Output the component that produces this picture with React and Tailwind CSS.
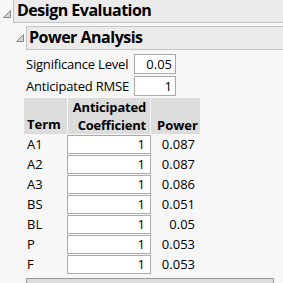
const rows = [
  ['A1', '1', '0.087'],
  ['A2', '1', '0.087'],
  ['A3', '1', '0.086'],
  ['BS', '1', '0.051'],
  ['BL', '1', '0.05'],
  ['P', '1', '0.053'],
  ['F', '1', '0.053'],
];

function Disclosure() {
  return (
    <svg width="8" height="8" viewBox="0 0 8 8" className="shrink-0">
      <polygon points="7.5,0.5 7.5,7.5 0.5,7.5" fill="#d4d4d4" stroke="#8a8a8a" strokeWidth="1" />
    </svg>
  );
}

export default function App() {
  return (
    <div className="w-[283px] h-[283px] overflow-hidden bg-[#f7f7f7] text-black font-['Open_Sans',sans-serif]">
      <div className="flex items-start">
        <div className="w-[13px] pl-[3px] pt-[10px]">
          <Disclosure />
        </div>
        <div className="flex-1 -mt-px h-[24px] bg-[#ebebeb] border-l border-b border-[#c4c4c4] pl-[3px] flex items-end pb-[1px]">
          <span className="text-[16px] font-bold leading-none tracking-[-0.5px] pb-[3px]">Design Evaluation</span>
        </div>
      </div>

      <div className="flex items-start mt-[3px]">
        <div className="w-[26px] pl-[16px] pt-[8px]">
          <Disclosure />
        </div>
        <div className="flex-1 h-[24px] bg-[#ebebeb] border-t border-l border-b border-[#c4c4c4] pl-[2px] flex items-end">
          <span className="text-[16px] font-bold leading-none tracking-[-0.5px] pb-[4px]">Power Analysis</span>
        </div>
      </div>

      <div className="pl-[26px] pt-[4px] text-[13px] leading-none">
        <div className="flex items-center h-[20px]">
          <span className="w-[108px] tracking-[-0.2px]">Significance Level</span>
          <div className="w-[42px] h-[20px] bg-white border border-[#a9a9a9] flex items-center justify-end pr-[3px]">0.05</div>
        </div>
        <div className="flex items-center h-[20px] mt-[2px]">
          <span className="w-[108px] tracking-[-0.2px]">Anticipated RMSE</span>
          <div className="w-[42px] h-[20px] bg-white border border-[#a9a9a9] flex items-center justify-end pr-[3px]">1</div>
        </div>
      </div>

      <div className="pl-[24px] pt-[2px] text-[13px] leading-none">
        <div className="flex h-[36px] w-[176px] font-bold">
          <div className="w-[43px] bg-[#dcdcdc] flex items-end pl-[3px] pb-[3px]">Term</div>
          <div className="w-[82px] ml-px bg-[#dcdcdc] flex flex-col items-end justify-end pr-[4px] tracking-[-0.2px]">
            <span className="leading-[18px]">Anticipated</span>
            <span className="leading-[18px]">Coefficient</span>
          </div>
          <div className="flex-1 ml-px bg-[#dcdcdc] flex items-end pl-[6px] pb-[2px]">Power</div>
        </div>
        <div className="flex flex-col pt-px">
          {rows.map(([term, coef, power]) => (
            <div key={term} className="flex items-start h-[20px]">
              <div className="w-[43px] pl-[3px] h-[19px] flex items-center">{term}</div>
              <div className="w-[84px] h-[19px] bg-white border border-[#a9a9a9] flex items-center justify-end pr-[5px]">{coef}</div>
              <div className="w-[44px] h-[19px] flex items-center justify-end">{power}</div>
            </div>
          ))}
        </div>
      </div>

      <div className="ml-[26px] mt-[3px] w-[248px] h-[20px] bg-[#dcdcdc] border border-[#9a9a9a]" />
    </div>
  );
}
